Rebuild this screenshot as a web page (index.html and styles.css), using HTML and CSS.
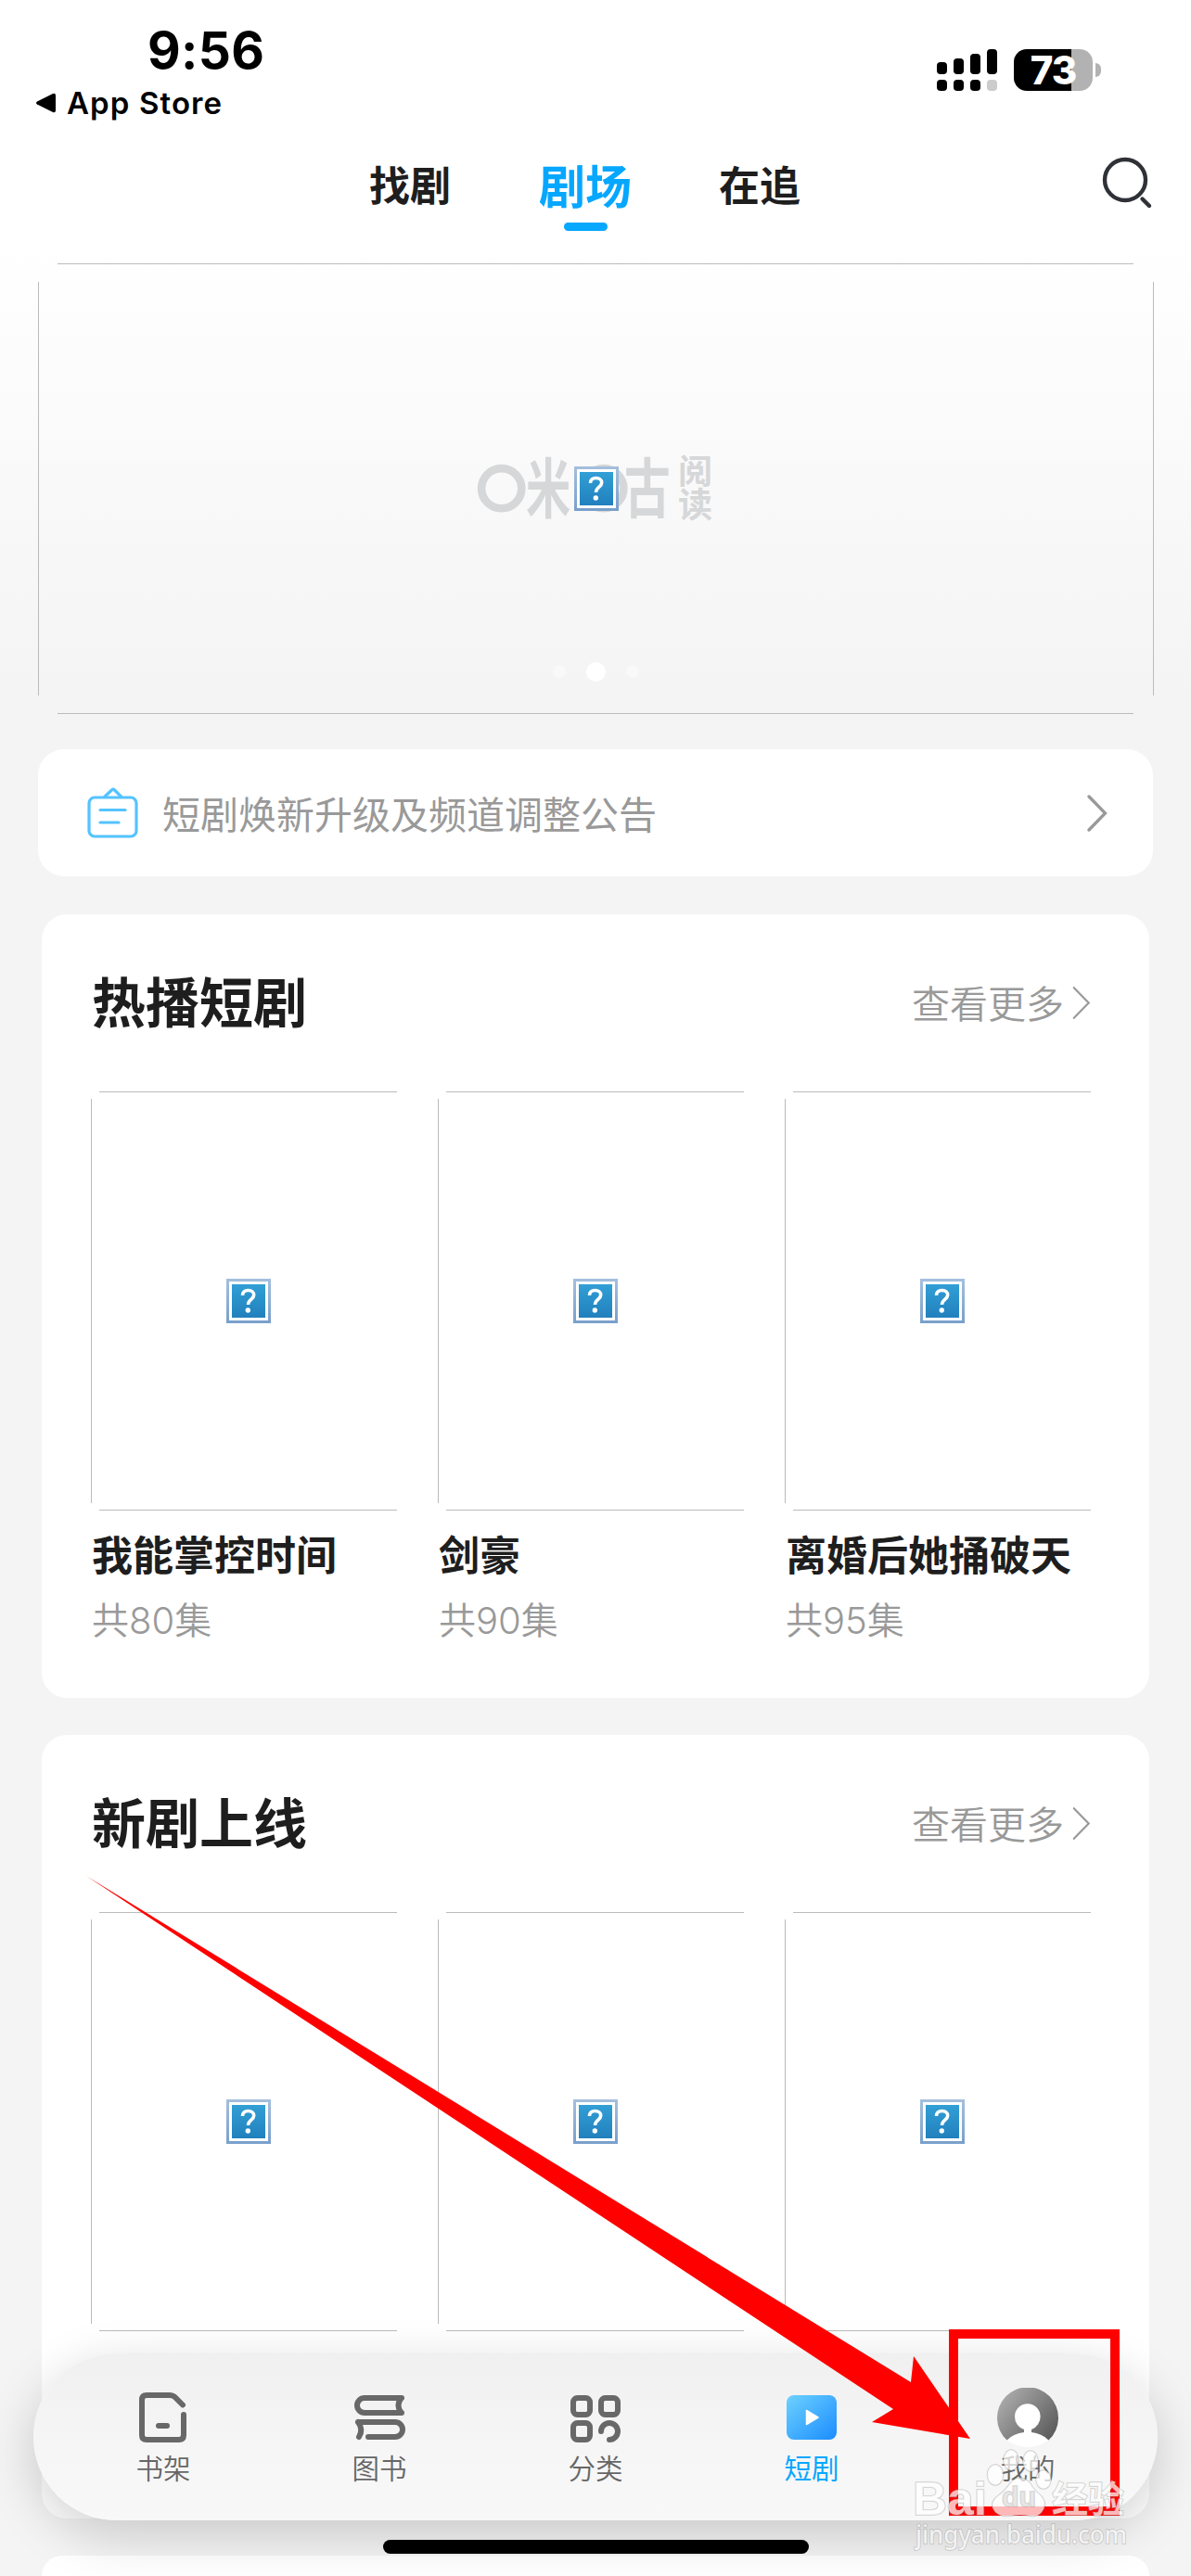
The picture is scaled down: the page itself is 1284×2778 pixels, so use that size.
FILE: index.html
```html
<!DOCTYPE html>
<html lang="zh-CN">
  <head>
    <meta charset="utf-8">
    <title>剧场</title>
    <link rel="stylesheet" href="styles.css">
  </head>
  <body>
    <svg class="defs" width="0" height="0">
      <defs>
        <linearGradient id="frame" x1="0" y1="0" x2="0" y2="1">
          <stop offset="0" stop-color="#a5bfdd"/>
          <stop offset="1" stop-color="#799fcb"/>
        </linearGradient>
        <linearGradient id="fill" x1="0" y1="0" x2="0" y2="1">
          <stop offset="0" stop-color="#329fd6"/>
          <stop offset="1" stop-color="#2180bd"/>
        </linearGradient>
        <linearGradient id="play" x1="0" y1="0" x2="1" y2="1">
          <stop offset="0" stop-color="#6dd2fe"/>
          <stop offset="1" stop-color="#1b8cff"/>
        </linearGradient>
        <linearGradient id="avatar" x1="0" y1="0.1" x2="1" y2="0.8">
          <stop offset="0" stop-color="#b2b2b2"/>
          <stop offset="1" stop-color="#5c5c5c"/>
        </linearGradient>
        <symbol id="missing" viewBox="0 0 48 48">
          <rect width="48" height="48" fill="url(#frame)"/>
          <rect x="3" y="3" width="42" height="42" fill="#fff"/>
          <rect x="6" y="6" width="36" height="36" fill="url(#fill)"/>
          <path d="M17.500 18c0-3.500 2.500-5.500 6-5.500 3.600 0 6.200 2 6.200 5 0 4.700-6.200 4.500-6.200 10.500" fill="none" stroke="#fff" stroke-width="3.600"/>
          <circle cx="23.300" cy="34" r="2.700" fill="#fff"/>
        </symbol>
        <symbol id="more" viewBox="0 0 22 40">
          <path d="M2 2l17.500 18L2 38" fill="none" stroke="currentColor" stroke-linecap="round"/>
        </symbol>
      </defs>
    </svg>

    <div class="status">
      <div class="status_left">
        <p class="time">9:56</p>
        <p class="back">
          <svg width="23" height="22" viewBox="0 0 23 22"><path d="M2 9.500L19 1q3-1 3 2v16q0 3-3 2L2 12.500q-2-1.500 0-3z"/></svg>
          <span>App Store</span>
        </p>
      </div>
      <div class="status_right">
        <svg width="66" height="46" viewBox="0 0 66 46">
          <rect x="0" y="14" width="11" height="13" rx="4"/>
          <rect x="18" y="10" width="11" height="17" rx="4"/>
          <rect x="36" y="5" width="11" height="22" rx="4"/>
          <rect x="54" y="0" width="11" height="27" rx="4"/>
          <rect x="0" y="33" width="11" height="12" rx="4"/>
          <rect x="18" y="33" width="11" height="12" rx="4"/>
          <rect x="36" y="33" width="11" height="12" rx="4"/>
          <rect x="54" y="33" width="11" height="12" rx="4" fill="#ccc"/>
        </svg>
        <div class="battery">73</div>
        <div class="battery_cap"></div>
      </div>
    </div>

    <div class="tabs">
      <a class="tab">找剧</a>
      <a class="tab active">剧场</a>
      <a class="tab">在追</a>
      <svg class="search" width="56" height="58" viewBox="0 0 56 58" fill="none" stroke="#2f3137" stroke-width="4.400" stroke-linecap="round">
        <ellipse cx="25" cy="26" rx="22" ry="22"/>
        <path d="M43.500 46.500l7.500 7.500"/>
      </svg>
    </div>

    <div class="banner">
      <svg class="logo" width="256" height="72" viewBox="0 0 256 72" fill="#d6d7d8">
        <g fill="none" stroke="#d6d7d8" stroke-width="8.600">
          <circle cx="26.700" cy="35.700" r="21.600"/>
          <circle cx="136.700" cy="35.700" r="21.600"/>
        </g>
        <text class="logo_big" transform="translate(53 62) scale(.69 1)">米</text>
        <text class="logo_big" transform="translate(159 62) scale(.71 1)">古</text>
        <text class="logo_small" x="217" y="31">阅</text>
        <text class="logo_small" x="217" y="67">读</text>
      </svg>
      <svg class="missing" width="48" height="48"><use href="#missing"/></svg>
      <div class="dots"><i></i><i class="on"></i><i></i></div>
    </div>

    <div class="notice">
      <svg width="56" height="56" viewBox="0 0 56 56" fill="none" stroke="#54c3ff" stroke-width="3.200" stroke-linecap="round" stroke-linejoin="round">
        <rect x="2" y="11" width="51" height="42" rx="6"/>
        <path d="M19 10l7.500-7q1.500-1.400 3 0l7 7M14 24.500h27M14 38h20"/>
      </svg>
      <span class="notice_text">短剧焕新升级及频道调整公告</span>
      <svg class="arrow" width="22" height="40" stroke-width="3.300"><use href="#more"/></svg>
    </div>

    <div class="card">
      <div class="card_head">
        <h2>热播短剧</h2>
        <a class="more"><span>查看更多</span><svg width="20" height="37" stroke-width="2.400"><use href="#more"/></svg></a>
      </div>
      <div class="list">
        <div class="item">
          <div class="poster"><svg class="missing" width="48" height="48"><use href="#missing"/></svg></div>
          <p class="name">我能掌控时间</p>
          <p class="count">共80集</p>
        </div>
        <div class="item">
          <div class="poster"><svg class="missing" width="48" height="48"><use href="#missing"/></svg></div>
          <p class="name">剑豪</p>
          <p class="count">共90集</p>
        </div>
        <div class="item">
          <div class="poster"><svg class="missing" width="48" height="48"><use href="#missing"/></svg></div>
          <p class="name">离婚后她捅破天</p>
          <p class="count">共95集</p>
        </div>
      </div>
    </div>

    <div class="card">
      <div class="card_head">
        <h2>新剧上线</h2>
        <a class="more"><span>查看更多</span><svg width="20" height="37" stroke-width="2.400"><use href="#more"/></svg></a>
      </div>
      <div class="list">
        <div class="item"><div class="poster"><svg class="missing" width="48" height="48"><use href="#missing"/></svg></div></div>
        <div class="item"><div class="poster"><svg class="missing" width="48" height="48"><use href="#missing"/></svg></div></div>
        <div class="item"><div class="poster"><svg class="missing" width="48" height="48"><use href="#missing"/></svg></div></div>
      </div>
    </div>

    <div class="card last"></div>

    <div class="nav">
      <a class="nav_item">
        <svg width="66" height="66" viewBox="0 0 66 66" fill="none" stroke="#686868" stroke-width="6" stroke-linecap="round" stroke-linejoin="round">
          <path d="M54 18.500L45 9.500Q42.500 8 40 8H15q-5 0-5 5v38q0 5 5 5h35q5 0 5-5V29M28 41h9"/>
        </svg>
        <span>书架</span>
      </a>
      <a class="nav_item">
        <svg width="66" height="66" viewBox="0 0 66 66" fill="none" stroke="#686868" stroke-width="6" stroke-linecap="round" stroke-linejoin="round">
          <path d="M57 11H17a8 8 0 0 0 0 16h40M56 12q-5 7 0 14M10 37h40a8 8 0 0 1 0 16H21M10 37q6 8 1 16"/>
        </svg>
        <span>图书</span>
      </a>
      <a class="nav_item">
        <svg width="66" height="66" viewBox="0 0 66 66" fill="none" stroke="#686868" stroke-width="6" stroke-linecap="round">
          <rect x="9" y="11" width="18" height="18" rx="4.500"/>
          <rect x="39" y="11" width="18" height="18" rx="4.500"/>
          <rect x="9" y="38" width="18" height="18" rx="4.500"/>
          <path d="M39 47a9 9 0 1 1 9 9"/>
        </svg>
        <span>分类</span>
      </a>
      <a class="nav_item current">
        <svg width="66" height="66" viewBox="0 0 66 66">
          <rect x="6" y="8" width="54" height="48" rx="8" fill="url(#play)"/>
          <path d="M27.500 24.500l12.500 7.500-12.500 7.500z" fill="#fff" stroke="#fff" stroke-width="1.500" stroke-linejoin="round"/>
        </svg>
        <span>短剧</span>
      </a>
      <a class="nav_item">
        <svg width="66" height="66" viewBox="0 0 66 66">
          <path d="M10.500 56.500a33 33 0 1 1 45 0z" fill="url(#avatar)"/>
          <path d="M10.500 56.500Q18 49 29 48v-3A14.500 14.500 0 0 1 19 31a13.800 13.800 0 0 1 27.600 0A14.500 14.500 0 0 1 37 45v3q11 1 18.500 8.500Q45 64 33 64t-22.500-7.500z" fill="#fff"/>
        </svg>
        <span>我的</span>
      </a>
    </div>
    <div class="home_bar"></div>

    <svg class="marks" width="1284" height="2778" viewBox="0 0 1284 2778">
      <rect x="1028" y="2517" width="174" height="191" fill="none" stroke="#f00" stroke-width="10"/>
      <path d="M93 2023L982 2569L985 2541L1046 2630L940 2612L963 2598z" fill="#f00"/>
      <g class="watermark">
        <text class="wm_latin" x="984" y="2712" textLength="80" lengthAdjust="spacingAndGlyphs">Bai</text>
        <ellipse cx="1073" cy="2669" rx="8.500" ry="11"/>
        <ellipse cx="1090" cy="2653" rx="8" ry="11"/>
        <ellipse cx="1111" cy="2654" rx="8" ry="11"/>
        <ellipse cx="1125" cy="2674" rx="8" ry="10"/>
        <path d="M1089 2678q10-11 21-1 5 9 12 14 8 9 1 18-5 6-13 4-10-2-20 0-10 2-17-4-7-8 1-16 10-7 15-15z"/>
        <text class="wm_du" x="1080" y="2703" textLength="37" lengthAdjust="spacingAndGlyphs">du</text>
        <text class="wm_cn" x="1134" y="2709">经验</text>
        <text class="wm_url" x="987" y="2743" textLength="228" lengthAdjust="spacingAndGlyphs">jingyan.baidu.com</text>
      </g>
    </svg>
  </body>
</html>
```
FILE: styles.css
```css
* {
  box-sizing: border-box;
}

body {
  position: relative;
  width: 1284px;
  height: 2778px;
  margin: 0;
  overflow: hidden;
  background: #f4f4f4 linear-gradient(#fff 0, #fff 260px, #f4f4f4 750px) no-repeat;
  font-family: "Noto Sans CJK SC", sans-serif;
  color: #1e1e1e;
}

p, h2 {
  margin: 0;
}

svg {
  display: block;
  flex: none;
}

.defs {
  position: absolute;
}

/* status bar */
.status {
  display: flex;
  justify-content: space-between;
  height: 150px;
  padding: 0 97px 0 38px;
  font-family: Inter, sans-serif;
  color: #000;
}

.time {
  padding: 24px 0 0 121px;
  font-size: 55px;
  font-weight: 700;
  line-height: 60px;
  letter-spacing: 0.3px;
}

.back {
  display: flex;
  align-items: center;
  gap: 11px;
  margin-top: 5px;
  font-size: 33px;
  font-weight: 600;
  line-height: 44px;
  letter-spacing: 1.1px;
}

.status_right {
  display: flex;
  height: 46px;
  margin-top: 53px;
}

.battery {
  width: 85px;
  height: 45px;
  margin: 0 3px 0 17px;
  border-radius: 14px;
  background: linear-gradient(90deg, #000 62px, #b2b2b2 62px);
  color: #fff;
  font-size: 42px;
  font-weight: 800;
  line-height: 45px;
  letter-spacing: -1px;
  text-align: center;
}

.battery_cap {
  width: 6px;
  height: 15px;
  margin-top: 15px;
  border-radius: 0 6px 6px 0;
  background: #b2b2b2;
}

/* top tabs */
.tabs {
  display: flex;
  height: 134px;
  padding-left: 398px;
}

.tab {
  font-size: 44px;
  font-weight: 700;
  line-height: 96px;
}

.tab.active {
  width: 100px;
  margin: 0 94px 0 95px;
  font-size: 50px;
  color: #06a7ff;
}

.tab.active::after {
  content: "";
  display: block;
  width: 47px;
  height: 9px;
  margin: -6px auto 0;
  border-radius: 5px;
  background: #06a7ff;
}

.search {
  margin: 18px 0 0 325px;
}

/* banner */
.banner {
  position: relative;
  display: flex;
  align-items: center;
  justify-content: center;
  width: 1203px;
  height: 486px;
  margin: 0 0 38px 41px;
  background:
    linear-gradient(#bbb, #bbb) 21px 0 / 1160px 1px,
    linear-gradient(#bbb, #bbb) 21px 100% / 1160px 1px,
    linear-gradient(#bbb, #bbb) 0 20px / 1px 446px,
    linear-gradient(#bbb, #bbb) 100% 20px / 1px 446px;
  background-repeat: no-repeat;
}

.logo {
  position: absolute;
  left: 473px;
  top: 207px;
  overflow: visible;
}

.logo_big {
  font-size: 70px;
  font-weight: 700;
}

.logo_small {
  font-size: 37px;
  font-weight: 700;
}

.banner .missing {
  position: relative;
}

.dots {
  position: absolute;
  bottom: 35px;
  display: flex;
  align-items: center;
  gap: 22px;
  height: 22px;
}

.dots i {
  width: 14px;
  height: 14px;
  border-radius: 50%;
  background: #f9f9f9;
}

.dots .on {
  width: 21px;
  height: 21px;
  background: #fff;
}

/* notice */
.notice {
  display: flex;
  align-items: center;
  width: 1202px;
  height: 137px;
  margin: 0 auto 41px;
  padding: 0 49px 0 53px;
  border-radius: 28px;
  background: #fff;
  color: #999;
}

.notice_text {
  flex: 1;
  margin: -2px 0 0 25px;
  font-size: 41px;
  font-weight: 400;
  line-height: 60px;
}

/* cards */
.card {
  width: 1194px;
  height: 845px;
  margin: 0 auto 40px;
  padding: 0 53px;
  border-radius: 27px;
  background: #fff;
}

.card.last {
  height: 22px;
  margin-bottom: 0;
  border-radius: 27px 27px 0 0;
}

.card_head {
  display: flex;
  align-items: center;
  justify-content: space-between;
  height: 191px;
}

.card_head h2 {
  margin: -8px 0 0 1px;
  font-size: 58px;
  font-weight: 700;
  line-height: 80px;
}

.more {
  display: flex;
  align-items: center;
  gap: 9px;
  margin-right: 10px;
  font-size: 41px;
  font-weight: 350;
  line-height: 60px;
  color: #999;
}

.more span {
  margin-top: -4px;
}

.list {
  display: grid;
  grid-template-columns: repeat(3, 340px);
  column-gap: 34px;
}

.poster {
  display: flex;
  align-items: center;
  justify-content: center;
  height: 452px;
  background:
    linear-gradient(#bbb, #bbb) 9px 0 / 321px 1px,
    linear-gradient(#bbb, #bbb) 9px 100% / 321px 1px,
    linear-gradient(#bbb, #bbb) 0 50% / 1px 436px;
  background-repeat: no-repeat;
}

.name {
  margin: 16px 0 0 1px;
  font-size: 44px;
  font-weight: 700;
  line-height: 60px;
  white-space: nowrap;
}

.count {
  margin: 18px 0 0 1px;
  font-family: Inter, "Noto Sans CJK SC", sans-serif;
  font-size: 40px;
  font-weight: 350;
  line-height: 50px;
  color: #999;
}

/* floating bottom nav */
.nav {
  position: absolute;
  left: 36px;
  top: 2538px;
  display: grid;
  grid-template-columns: repeat(5, 233px);
  justify-content: center;
  width: 1212px;
  height: 180px;
  border-radius: 90px;
  background: linear-gradient(#f0f0f0, #f6f6f6 60%, #f8f8f8);
  box-shadow: 0 16px 54px rgba(0, 0, 0, 0.18);
}

.nav_item {
  display: flex;
  flex-direction: column;
  align-items: center;
  padding-top: 37px;
  font-size: 29.5px;
  font-weight: 350;
  line-height: 40px;
  color: #666;
}

.nav_item svg {
  margin-bottom: -1px;
}

.nav_item.current {
  color: #06a7ff;
  font-weight: 400;
}

.home_bar {
  position: absolute;
  left: 413px;
  top: 2739px;
  width: 459px;
  height: 15px;
  border-radius: 8px;
  background: #000;
}

/* arrow, frame and watermark over the page */
.marks {
  position: absolute;
  left: 0;
  top: 0;
}

.watermark {
  fill: rgba(255, 255, 255, 0.72);
  stroke: rgba(140, 140, 140, 0.4);
  stroke-width: 1.5;
  paint-order: stroke;
}

.wm_latin {
  font: 700 50px "Liberation Sans", sans-serif;
}

.wm_du {
  font: 700 30px "Liberation Sans", sans-serif;
  fill: rgba(225, 225, 225, 0.8);
}

.wm_cn {
  font-size: 39px;
  font-weight: 700;
}

.wm_url {
  font: 500 27px "Noto Sans", sans-serif;
}
```
